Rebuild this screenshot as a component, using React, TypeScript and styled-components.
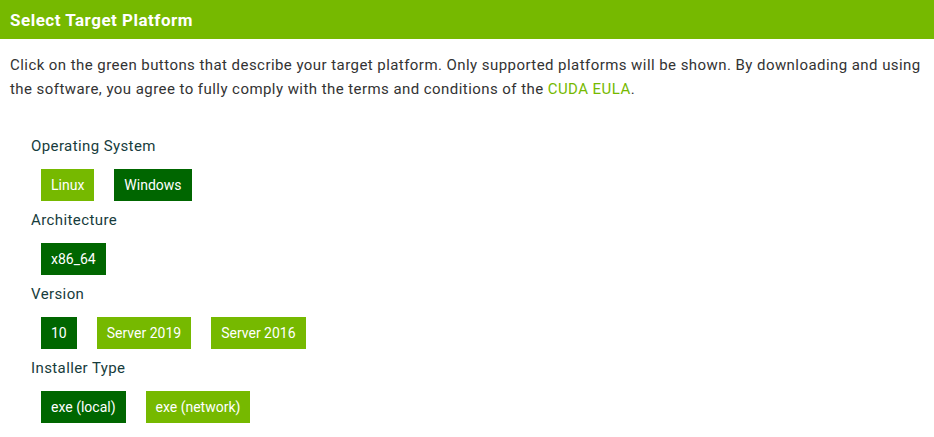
import React from "react";
import styled, { createGlobalStyle } from "styled-components";

const Global = createGlobalStyle`
  html, body { margin: 0; padding: 0; background: #fff; }
  body { font-family: Roboto, "Liberation Sans", sans-serif; }
`;

const Page = styled.div`
  width: 934px;
`;

const Header = styled.div`
  height: 39px;
  background: #76b900;
  color: #fff;
  font-weight: 700;
  font-size: 17px;
  letter-spacing: 0.5px;
  display: flex;
  align-items: center;
  padding-left: 10px;
`;

const Intro = styled.p`
  margin: 14px 0 0;
  padding: 0 10px;
  font-size: 15px;
  letter-spacing: 0.44px;
  line-height: 24px;
  color: #333;
`;

const Link = styled.a`
  color: #76b900;
  text-decoration: none;
`;

const Options = styled.div`
  margin-top: 33px;
  padding-left: 31px;
  display: flex;
  flex-direction: column;
`;

const Label = styled.div`
  font-size: 15px;
  letter-spacing: 0.4px;
  line-height: 24px;
  color: #173c3c;
`;

const Row = styled.div`
  display: flex;
  gap: 20px;
  margin: 11px 0 7px 10px;
`;

const Button = styled.div<{ $active?: boolean }>`
  height: 32px;
  padding: 0 10px;
  display: flex;
  align-items: center;
  font-size: 14px;
  color: #fff;
  background: ${(p) => (p.$active ? "#006600" : "#76b900")};
`;

const groups: { label: string; options: { name: string; active?: boolean }[] }[] = [
  { label: "Operating System", options: [{ name: "Linux" }, { name: "Windows", active: true }] },
  { label: "Architecture", options: [{ name: "x86_64", active: true }] },
  {
    label: "Version",
    options: [{ name: "10", active: true }, { name: "Server 2019" }, { name: "Server 2016" }],
  },
  {
    label: "Installer Type",
    options: [{ name: "exe (local)", active: true }, { name: "exe (network)" }],
  },
];

export default function App() {
  return (
    <Page>
      <Global />
      <Header>Select Target Platform</Header>
      <Intro>
        Click on the green buttons that describe your target platform. Only supported platforms will
        be shown. By downloading and using the software, you agree to fully comply with the terms and
        conditions of the <Link href="#">CUDA EULA</Link>.
      </Intro>
      <Options>
        {groups.map((g) => (
          <React.Fragment key={g.label}>
            <Label>{g.label}</Label>
            <Row>
              {g.options.map((o) => (
                <Button key={o.name} $active={o.active}>
                  {o.name}
                </Button>
              ))}
            </Row>
          </React.Fragment>
        ))}
      </Options>
    </Page>
  );
}
